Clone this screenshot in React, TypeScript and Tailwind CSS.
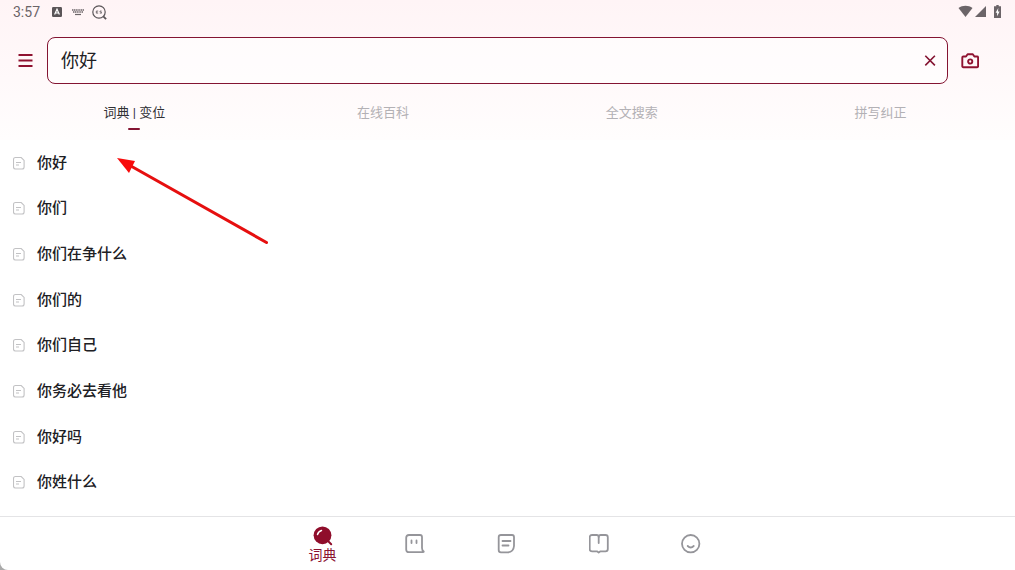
import { useState } from 'react';

const words = ['你好', '你们', '你们在争什么', '你们的', '你们自己', '你务必去看他', '你好吗', '你姓什么'];
const tabs = ['词典 | 变位', '在线百科', '全文搜索', '拼写纠正'];

function StatusBar() {
  return (
    <div className="flex h-6 items-center justify-between px-[13px] text-[#6b6468]">
      <div className="flex items-center">
        <span className="w-[39px] font-['Roboto',sans-serif] text-[14px] leading-6">3:57</span>
        <svg className="h-[10px] w-[10px]" viewBox="0 0 10 10">
          <rect width="10" height="10" rx="1.2" fill="#5a5558" />
          <path d="M2.6 7.5 5 2.3l2.4 5.2M3.4 6h3.2" fill="none" stroke="#fff" strokeWidth="1.2" />
        </svg>
        <svg className="ml-[10px] h-[7px] w-3" viewBox="0 0 12 7" fill="none" stroke="currentColor">
          <path d="M0 1h12M1 3h10" strokeWidth="1.3" strokeDasharray="1.3 .5" />
          <path d="M3 5.5h6" strokeWidth="1.2" />
        </svg>
        <svg className="ml-2 h-[15px] w-[15px]" viewBox="0 0 15 15" fill="none" stroke="#5a5558" strokeWidth="1.2">
          <circle cx="7" cy="7" r="6.2" />
          <path d="m11.3 11.3 2.8 2.8" strokeWidth="1.8" />
          <path d="M6.2 6H4.3v2.2h1.9M4.3 7.1h1.5M9.6 6H8v1.1h1.5v1.1H7.8" strokeWidth=".7" />
        </svg>
      </div>
      <svg className="h-[14px] w-11" viewBox="0 0 44 14" fill="currentColor">
        <path d="M.5 3C4.4 0 10.6 0 14.5 3L7.5 12Z" />
        <path d="M28 1v11H17z" />
        <path d="M38.3 0h2.4v1.3H43V13h-7V1.3h2.3z" />
        <path d="M40.3 3 37.6 7.7h1.5v3.5l2.5-4.800H40z" fill="#fff" />
      </svg>
    </div>
  );
}

function DocIcon() {
  return (
    <svg className="h-[14px] w-3 shrink-0" viewBox="0 0 12 14" fill="none" stroke="#c2c2c4" strokeWidth="1.1">
      <path d="M2.5 1.5h5.7l2.9 2.9V11q0 2-2 2H2.5q-2 0-2-2V3.5q0-2 2-2z" />
      <path d="M3 6.5h5M3 9h3" />
    </svg>
  );
}

const navItems = [
  {
    label: '对话',
    icon: (
      <>
        <path d="M4 1h11q2 0 2 2v11q0 2.500 1.600 3.200.6.900-.6 1H4q-2.800 0-2.800-2.800V3.800Q1.200 1 4 1z" />
        <path d="M6.5 6.5V9M11.5 6.5V9" />
      </>
    ),
  },
  {
    label: '笔记',
    icon: (
      <>
        <path d="M4 1h11q2 0 2 2v9q-.5 6-6 6.300H4q-2.300 0-2.300-2.300V3.300Q1.700 1 4 1z" />
        <path d="M5.5 7h8M5.5 11.5h6" />
      </>
    ),
  },
  {
    label: '书籍',
    icon: (
      <>
        <path d="M3 1h4.700q2 0 2 2 0-2 2-2h4.800q2.300 0 2.300 2.300V15q0 2.300-2.300 2.300h-5l-1.800 1.200-1.800-1.200H3Q.7 17.300.7 15V3.300Q.7 1 3 1z" />
        <path d="M9.700 3v6" />
      </>
    ),
  },
  {
    label: '我的',
    icon: (
      <>
        <circle cx="9.700" cy="9.700" r="8.700" />
        <path d="M6.700 12q3 3 6 0" />
      </>
    ),
  },
];

export default function App() {
  const [query, setQuery] = useState('你好');
  const [active, setActive] = useState(0);

  return (
    <div className="min-h-screen bg-[#aaa]">
      <div className="flex min-h-screen flex-col rounded-bl-lg bg-white font-['Roboto','Noto_Sans_CJK_SC',sans-serif] text-[#202024]">
        <header className="bg-linear-to-b from-[#fff4f6] to-[#fffdfd]">
          <StatusBar />
          <div className="flex items-center pl-[18px] pr-9 pt-[13px]">
            <button aria-label="菜单" className="w-[29px] text-[#8f1230]">
              <svg className="h-[14px] w-[15px]" viewBox="0 0 15 14" fill="none" stroke="currentColor" strokeWidth="2">
                <path d="M.5 1h14M.5 6.5h14M.5 12h14" />
              </svg>
            </button>
            <div className="flex h-[47px] min-w-0 flex-1 items-center rounded-lg border border-[#841432] bg-white/60 pl-[13px] pr-[10px]">
              <input
                aria-label="搜索"
                value={query}
                onChange={(e) => setQuery(e.target.value)}
                className="min-w-0 flex-1 bg-transparent text-[18px] leading-6 outline-none"
              />
              <button aria-label="清除" onClick={() => setQuery('')} className="text-[#841432]">
                <svg className="h-[14px] w-[14px]" viewBox="0 0 14 14" fill="none" stroke="currentColor" strokeWidth="1.6">
                  <path d="m2.300 1.800 9.600 9.600M11.900 1.800l-9.600 9.600" />
                </svg>
              </button>
            </div>
            <button aria-label="拍照" className="ml-[13px] text-[#8f1230]">
              <svg className="h-4 w-[18px]" viewBox="0 0 18 16" fill="none" stroke="currentColor" strokeWidth="1.9" strokeLinejoin="round">
                <path d="M2.300 3.500H5l1.600-2.300h5.200l1.600 2.300h2.700q1 0 1 1v8.700q0 1-1 1H2.300q-1 0-1-1V4.500q0-1 1-1z" />
                <circle cx="9.200" cy="8.500" r="2.100" />
              </svg>
            </button>
          </div>
          <div role="tablist" className="grid h-14 grid-cols-4 px-[10px] pt-[19px]">
            {tabs.map((tab, i) => (
              <button
                key={tab}
                role="tab"
                aria-selected={i === active}
                onClick={() => setActive(i)}
                className={`flex flex-col items-center text-[13px] leading-5 ${i === active ? 'text-[#303034]' : 'text-[#b3b1b5]'}`}
              >
                {tab}
                {i === active && <span className="mt-[5px] h-[2px] w-3 rounded-full bg-[#841432]" />}
              </button>
            ))}
          </div>
        </header>

        <main className="flex flex-1 flex-col pb-[11px]">
          <ul className="grid flex-1 auto-rows-fr">
            {words.map((word) => (
              <li key={word} className="flex">
                <button className="flex flex-1 items-center gap-3 px-[13px] text-left text-[15px] font-medium leading-6">
                  <DocIcon />
                  {word}
                </button>
              </li>
            ))}
          </ul>
        </main>

        <nav className="flex h-[54px] justify-center border-t border-[#e4e4e6] pr-[2px]">
          <button className="flex w-[92px] flex-col items-center pt-[9px] text-[14px] text-[#8b1230]">
            <svg className="h-5 w-5 shrink-0" viewBox="0 0 20 20" fill="none" strokeLinecap="round">
              <circle cx="9.5" cy="9.3" r="8.9" fill="#8f0d2b" />
              <path d="m15.5 15.5 2.700 2.700" stroke="#8f0d2b" strokeWidth="2" />
              <path d="M4.5 8.500q.8-3 4-4" stroke="#fff" strokeWidth="1.500" />
            </svg>
            <span className="leading-[18px]">词典</span>
          </button>
          {navItems.map((item) => (
            <button key={item.label} aria-label={item.label} className="flex w-[92px] items-center justify-center text-[#95959a]">
              <svg className="h-5 w-5" viewBox="0 0 20 20" fill="none" stroke="currentColor" strokeWidth="1.8" strokeLinecap="round" strokeLinejoin="round">
                {item.icon}
              </svg>
            </button>
          ))}
        </nav>
      </div>

      {/* pointer drawn over the result list */}
      <svg className="pointer-events-none absolute left-[116px] top-[156px] h-[90px] w-[154px]" viewBox="0 0 154 90">
        <path d="M14 9.5 150.5 86.5" stroke="#e60f0f" strokeWidth="3" strokeLinecap="round" />
        <path d="M1 2 19 5 13 17z" fill="#f80b0b" />
      </svg>
    </div>
  );
}
